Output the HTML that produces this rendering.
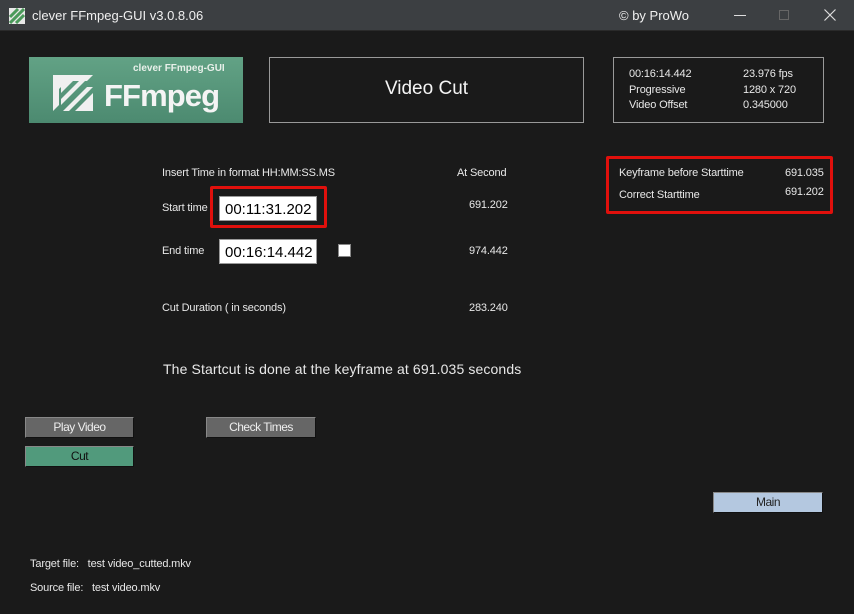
<!DOCTYPE html>
<html><head><meta charset="utf-8"><style>
*{margin:0;padding:0;box-sizing:border-box}
body{width:854px;height:614px;background:#1a1a1a;font-family:"Liberation Sans",sans-serif;color:#e8e8e8;position:relative;overflow:hidden;font-size:11px;letter-spacing:-0.15px}
.a{position:absolute;white-space:nowrap}
#tb{position:absolute;left:0;top:0;width:854px;height:31px;background:#3c3f42;border-bottom:1px solid #2a2a2a;letter-spacing:0}
.btn{position:absolute;height:21px;border:1px solid #888;border-right-color:#111;border-bottom-color:#111;text-align:center;line-height:19px;font-size:12px;letter-spacing:-0.5px}
.inp{position:absolute;background:#fff;color:#000;font-size:15px;height:25px;line-height:25px;padding-left:5px;border:1px solid #999;letter-spacing:0}
.red{position:absolute;border:3px solid #e0100c;border-radius:2px}
</style></head><body>
<div id="tb">
 <svg class="a" style="left:9px;top:8px" width="16" height="16" viewBox="0 0 16 16"><rect width="16" height="16" fill="#e8e8e8"/><path d="M1 15L15 1M1 9L9 1M7 15L15 7" stroke="#4a9a5a" stroke-width="3"/></svg>
 <div class="a" style="left:32px;top:8px;font-size:13px;color:#f0f0f0">clever FFmpeg-GUI v3.0.8.06</div>
 <div class="a" style="left:619px;top:8px;font-size:13px;color:#f0f0f0">© by ProWo</div>
 <div class="a" style="left:734px;top:15px;width:12px;height:1px;background:#ddd"></div>
 <div class="a" style="left:779px;top:10px;width:10px;height:10px;border:1px solid #666"></div>
 <svg class="a" style="left:824px;top:9px" width="12" height="12" viewBox="0 0 12 12"><path d="M0.5 0.5L11.5 11.5M11.5 0.5L0.5 11.5" stroke="#ddd" stroke-width="1.2"/></svg>
</div>
<div class="a" style="left:29px;top:57px;width:214px;height:66px;background:linear-gradient(#62a285,#4c8a70)"></div>
<div class="a" style="left:133px;top:63px;font-size:10px;font-weight:bold;color:#e8f0ea;letter-spacing:0">clever FFmpeg-GUI</div>
<svg class="a" style="left:53px;top:75px" width="46" height="36" viewBox="0 0 46 36"><path d="M0 0H40L34 6H14L6 14V30L0 36ZM10 36L34 12H40L16 36ZM22 36L40 18V36ZM8 24L30 2H36L8 30ZM8 12L18 2H24L8 18Z" fill="#f0f0f0"/></svg>
<div class="a" style="left:104px;top:78px;font-size:31px;font-weight:bold;color:#f4f4f4;letter-spacing:-0.9px">FFmpeg</div>
<div class="a" style="left:269px;top:57px;width:315px;height:66px;border:1px solid #999"></div>
<div class="a" style="left:269px;top:78px;width:315px;text-align:center;font-size:19px;color:#f4f4f4;letter-spacing:0">Video Cut</div>
<div class="a" style="left:613px;top:57px;width:211px;height:66px;border:1px solid #999"></div>
<div class="a" style="left:629px;top:67px;line-height:15.5px">00:16:14.442<br>Progressive<br>Video Offset</div>
<div class="a" style="left:743px;top:67px;line-height:15.5px">23.976 fps<br>1280 x 720<br>0.345000</div>
<div class="red" style="left:606px;top:156px;width:227px;height:58px"></div>
<div class="a" style="left:619px;top:167px">Keyframe before Starttime</div>
<div class="a" style="left:785px;top:167px">691.035</div>
<div class="a" style="left:619px;top:189px">Correct Starttime</div>
<div class="a" style="left:785px;top:186px">691.202</div>
<div class="a" style="left:162px;top:167px">Insert Time in format HH:MM:SS.MS</div>
<div class="a" style="left:457px;top:167px">At Second</div>
<div class="a" style="left:162px;top:202px">Start time</div>
<div class="red" style="left:210px;top:186px;width:117px;height:42px"></div>
<div class="inp" style="left:219px;top:196px;width:98px">00:11:31.202</div>
<div class="a" style="left:469px;top:199px">691.202</div>
<div class="a" style="left:162px;top:245px">End time</div>
<div class="inp" style="left:219px;top:239px;width:98px">00:16:14.442</div>
<div class="a" style="left:338px;top:244px;width:13px;height:13px;background:#fff;border:1px solid #888"></div>
<div class="a" style="left:469px;top:245px">974.442</div>
<div class="a" style="left:162px;top:302px">Cut Duration ( in seconds)</div>
<div class="a" style="left:469px;top:302px">283.240</div>
<div class="a" style="left:163px;top:361px;font-size:14px;letter-spacing:0.12px">The Startcut is done at the keyframe at 691.035 seconds</div>
<div class="btn" style="left:25px;top:417px;width:109px;background:#666;color:#eee">Play Video</div>
<div class="btn" style="left:25px;top:446px;width:109px;background:#519a7c;color:#111">Cut</div>
<div class="btn" style="left:206px;top:417px;width:110px;background:#666;color:#eee">Check Times</div>
<div class="btn" style="left:713px;top:492px;width:110px;background:#b4c8e0;color:#222">Main</div>
<div class="a" style="left:30px;top:558px">Target file:&nbsp;&nbsp;&nbsp;test video_cutted.mkv</div>
<div class="a" style="left:30px;top:582px">Source file:&nbsp;&nbsp;&nbsp;test video.mkv</div>
</body></html>
